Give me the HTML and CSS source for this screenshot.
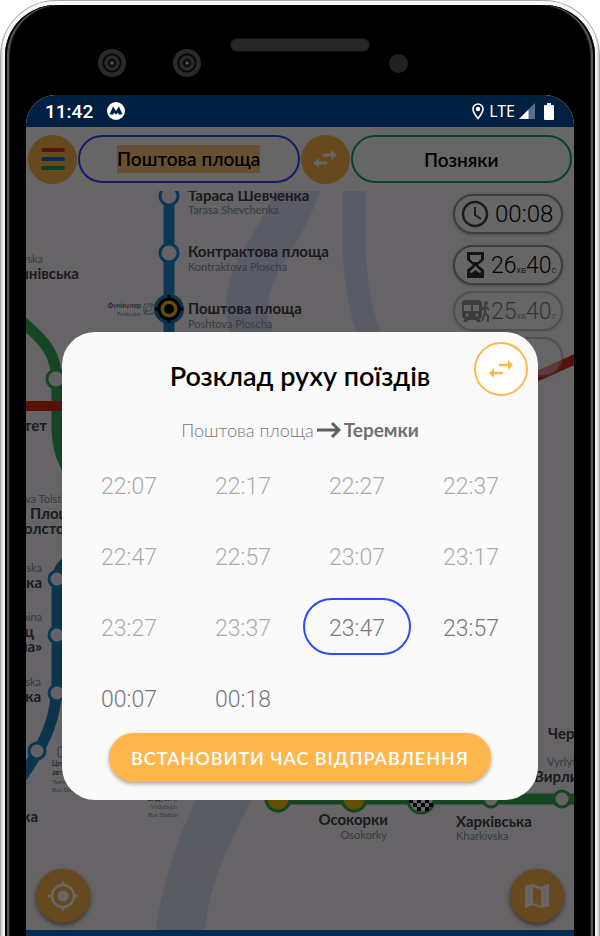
FILE: index.html
```html
<!DOCTYPE html>
<html lang="uk">
<head>
<meta charset="utf-8">
<meta name="viewport" content="width=device-width, initial-scale=1">
<title>Розклад руху поїздів</title>
<link rel="stylesheet" href="styles.css">
</head>
<body>
<div class="phone">
  <div class="bezel">
    <header class="hardware">
      <span class="lenses"><i class="lens"></i><i class="lens"></i></span>
      <span class="speaker"></span>
      <span class="sensor"></span>
    </header>
    <div class="screen">
      <div class="status">
        <span class="clock">11:42</span>
        <svg class="metro" viewBox="0 0 18 18" aria-hidden="true"><circle cx="9" cy="9" r="9" fill="#fff"/><path d="M2.500 12.500 6 4.500l3 4.500 3-4.500 3.500 8h-3.800l-.7-2L9 12.800l-2-2.300-.7 2z" fill="#002041"/></svg>
        <span class="spacer"></span>
        <svg class="pin" viewBox="0 0 12 17" aria-hidden="true"><path d="M6 1a5 5 0 0 0-5 5c0 3.500 5 9.500 5 9.500S11 9.500 11 6a5 5 0 0 0-5-5z" fill="none" stroke="#fff" stroke-width="1.600"/><circle cx="6" cy="6" r="2.200" fill="#fff"/></svg>
        <span class="lte">LTE</span>
        <svg class="signal" viewBox="0 0 16 16" aria-hidden="true"><path d="M0 16 16 0v16z" fill="#596f87"/><path d="M0 16 9.500 6.500V16z" fill="#fff"/></svg>
        <svg class="battery" viewBox="0 0 10 17" aria-hidden="true"><path d="M3 0h4v2h2a1 1 0 0 1 1 1v13a1 1 0 0 1-1 1H1a1 1 0 0 1-1-1V3a1 1 0 0 1 1-1h2z" fill="#fff"/></svg>
      </div>
      <main class="app">
        <div class="route">
          <button class="round" type="button" aria-label="Меню">
            <svg class="icon24" viewBox="0 0 24 24"><g stroke-width="4" stroke-linecap="round"><path d="M2 3h20" stroke="#d5303a"/><path d="M2 12h20" stroke="#0a7cc5"/><path d="M2 21h20" stroke="#1ca350"/></g></svg>
          </button>
          <button class="station from" type="button"><mark>Поштова площа</mark></button>
          <button class="round" type="button" aria-label="Поміняти станції">
            <svg class="icon24" viewBox="0 0 24 24"><g fill="none" stroke="#fff" stroke-width="3" stroke-linecap="round"><path d="M11 8h9M4 16h9"/></g><path d="m18 3 6 5-6 5zM6 11l-6 5 6 5z" fill="#fff"/></svg>
          </button>
          <button class="station to" type="button">Позняки</button>
        </div>
        <div class="map">
          <svg class="scheme" viewBox="26 191 548 745" preserveAspectRatio="xMidYMin slice" role="img" aria-label="Схема метро">
            <g fill="none" stroke="#dfe5ff">
              <path d="M302 180C280 245 246 265 247 310C250 350 280 400 340 430" stroke-width="42"/>
              <path d="M354 180V250C356 300 365 325 385 380" stroke-width="23"/>
            </g>
            <path d="M155 936C160 890 180 830 197 799H252C225 850 207 890 205 936z" fill="#e2e6f8"/>
            <path d="M178 850H225L217 871H171z" fill="#e8e4f8"/>
            <path d="M169 191V345" stroke="#1c8ad1" stroke-width="11"/>
            <path d="M20 320C44 340 57 352 57 385V430C58 455 66 470 80 485" stroke="#37ad57" stroke-width="11" fill="none"/>
            <path d="M20 406H470L580 357" stroke="#db2a19" stroke-width="10" fill="none"/>
            <path d="M68 560C57 570 57 575 57 590V680C57 720 45 742 22 777" stroke="#1c80bd" stroke-width="11" fill="none"/>
            <path d="M270 799H580" stroke="#37ad57" stroke-width="11"/>
            <g fill="#fbf4fa" stroke="#1c8ad1" stroke-width="3"><circle cx="169" cy="196" r="9"/><circle cx="169" cy="253" r="9"/><circle cx="57" cy="579" r="8"/><circle cx="57" cy="635" r="8"/><circle cx="57" cy="693" r="8"/><circle cx="37" cy="751" r="8"/></g>
            <g fill="#fbf4fa" stroke="#37ad57" stroke-width="3"><circle cx="56" cy="379" r="9"/><circle cx="491" cy="799" r="8"/><circle cx="562" cy="799" r="8"/></g>
            <circle cx="169" cy="309" r="15" fill="#1c80bd"/><circle cx="169" cy="309" r="10" fill="#f5c400" stroke="#000" stroke-width="3"/><circle cx="169" cy="309" r="5"/><path d="M169 295v5M169 318v5M155 309h5M178 309h5" stroke="#000" stroke-width="3"/>
            <g fill="#f5c400" stroke="#37ad57" stroke-width="3"><circle cx="278" cy="799" r="12"/><circle cx="354" cy="799" r="12"/></g>
            <circle cx="421" cy="800" r="13" fill="#fff" stroke="#37ad57" stroke-width="3"/>
            <path d="M409 799h4v4h-4zM417 799h4v4h-4zM425 799h4v4h-4zM413 803h4v4h-4zM421 803h4v4h-4zM429 803h4v4h-4zM417 807h4v4h-4zM425 807h4v4h-4z"/>
            <g class="name">
              <text x="188" y="201">Тараса Шевченка</text><text x="188" y="257">Контрактова площа</text><text x="188" y="314">Поштова площа</text>
              <text x="79" y="279" class="end">Лук’янівська</text><text x="47" y="431" class="end">Університет</text>
              <text x="30" y="519">Площа</text><text x="24" y="534">олстого</text>
              <text x="42" y="588" class="end">Олімпійська</text><text x="34" y="637" class="end">Палац</text><text x="42" y="652" class="end">«Україна»</text><text x="41" y="702" class="end">Либідська</text><text x="38" y="822" class="end">Деміївська</text>
              <text x="388" y="825" class="end">Осокорки</text><text x="456" y="827">Харківська</text><text x="548" y="739">Червоний хутір</text><text x="534" y="782">Вирлиця</text>
            </g>
            <g class="latin">
              <text x="188" y="214">Tarasa Shevchenka</text><text x="188" y="271">Kontraktova Ploscha</text><text x="188" y="328">Poshtova Ploscha</text>
              <text x="43" y="263" class="end">Lukianivska</text><text x="25" y="503">va Tolstoho</text><text x="42" y="572" class="end">Olimpiiska</text><text x="42" y="621" class="end">Ukraina</text><text x="41" y="686" class="end">Lybidska</text>
              <text x="387" y="839" class="end">Osokorky</text><text x="456" y="840">Kharkivska</text><text x="547" y="766">Vyrlytsia</text>
            </g>
            <g class="tiny">
              <text x="141" y="308" class="end dark">Фунікулер</text><text x="141" y="316" class="end">Funicular</text>
              <text x="52" y="766" class="dark">Центральний</text><text x="52" y="775" class="dark">автовокзал</text><text x="52" y="784">Tsentralnyi</text><text x="52" y="792">Bus Station</text>
              <text x="177" y="801" class="end dark">Видубичі</text><text x="177" y="809" class="end">Vydubych</text><text x="178" y="817" class="end">Bus Station</text>
            </g>
            <g fill="none" stroke="#7f9aaa"><rect x="144" y="304" width="10" height="10" rx="2"/><path d="M146 311c0-5 2-5 6-5 0 5-2 5-6 5l-1 2"/><rect x="58" y="747" width="10" height="10" rx="2"/></g>
          </svg>
          <div class="stats">
            <div class="pill"><svg class="icon28" viewBox="0 0 28 28"><circle cx="14" cy="14" r="12" fill="none" stroke="#444" stroke-width="2.500"/><path d="M14 7v8l6 4" fill="none" stroke="#444" stroke-width="2"/></svg><span>00:08</span></div>
            <div class="pill ride"><svg class="icon28" viewBox="0 0 28 28"><path d="M6 1h17v8l-6 5 6 5v8H6v-8l6-5-6-5z" fill="#333"/><path d="M9 4h11v4l-3 3h-5L9 8zM14.500 15l6 6-2 1-4-3-4 3-2-1z" fill="#fff"/></svg><span>26<small>хв</small>40<small>с</small></span></div>
            <div class="pill ride faded"><svg class="icon28" viewBox="0 0 28 28"><path d="M5 3h11c3 0 5 1 5 4v11c0 2-1 4-3 4l2 3h-4l-1-2H7l-1 2H2l2-3c-2 0-3-2-3-4V7c0-3 1-4 4-4z" fill="#333"/><path d="M3 8h7v6H3zM12 8h6v6h-6z" fill="#fff"/><circle cx="6" cy="18" r="1.500" fill="#fff"/><circle cx="16" cy="18" r="1.500" fill="#fff"/><circle cx="25" cy="6" r="2" fill="#333"/><path d="M24 9v7l3 3v6M24 16l-3 8M21 13l3-4 4 4" fill="none" stroke="#333" stroke-width="2"/></svg><span>25<small>хв</small>40<small>с</small></span></div>
            <div class="pill faded"></div>
          </div>
          <div class="fabs">
            <button class="fab" type="button" aria-label="Моє місце"><svg class="icon30" viewBox="0 0 30 30"><g fill="none" stroke="#fff" stroke-width="2.500"><circle cx="15" cy="15" r="11"/><path d="M15 0v5M15 25v5M0 15h5M25 15h5"/></g><circle cx="15" cy="15" r="5.500" fill="#fff"/></svg></button>
            <button class="fab" type="button" aria-label="Карта"><svg class="icon24" viewBox="0 0 24 24"><path d="M0 2 8 0l8 3 8-3v22l-8 2-8-3-8 3zM8 3v16l8 3V6z" fill="#fff" fill-rule="evenodd"/></svg></button>
          </div>
          <div class="footbar"></div>
        </div>
        <div class="scrim">
          <section class="dialog" role="dialog" aria-labelledby="dialog-title">
            <button class="swap" type="button" aria-label="Змінити напрямок"><svg class="icon24" viewBox="0 0 24 24"><g fill="none" stroke="#ffb74d" stroke-width="2.500" stroke-linecap="round"><path d="M11 8h9M4 16h9"/></g><path d="m19 3 5 5-5 5zM5 11l-5 5 5 5z" fill="#ffb74d"/></svg></button>
            <h1 id="dialog-title">Розклад руху поїздів</h1>
            <p class="direction"><span>Поштова площа</span><svg class="arrow" viewBox="0 0 24 16" aria-hidden="true"><path d="M0 8h22M15 1l7 7-7 7" fill="none" stroke="#596163" stroke-width="3"/></svg><strong>Теремки</strong></p>
            <div class="times">
              <button type="button" class="past">22:07</button><button type="button" class="past">22:17</button><button type="button" class="past">22:27</button><button type="button" class="past">22:37</button>
              <button type="button" class="past">22:47</button><button type="button" class="past">22:57</button><button type="button" class="past">23:07</button><button type="button" class="past">23:17</button>
              <button type="button" class="past">23:27</button><button type="button" class="past">23:37</button><button type="button" class="chosen">23:47</button><button type="button">23:57</button>
              <button type="button">00:07</button><button type="button">00:18</button>
            </div>
            <button class="submit" type="button">ВСТАНОВИТИ ЧАС ВІДПРАВЛЕННЯ</button>
          </section>
        </div>
      </main>
    </div>
  </div>
</div>
</body>
</html>
```
FILE: styles.css
```css
* { box-sizing: border-box; }

body {
  margin: 0;
  background: #fff;
  font-family: Lato, "Noto Sans", sans-serif;
  color: #000;
}

button {
  font: inherit;
  color: inherit;
  padding: 0;
  border: 0;
  background: none;
}

svg { display: block; flex: none; }

.phone {
  display: flex;
  height: 100vh;
  min-height: 860px;
  padding: 4px 4px 0;
  border: 1px solid #aaa;
  border-bottom: 0;
  border-radius: 56px 56px 0 0;
  background: linear-gradient(90deg, #ccc, #f8f8f8 3px, #f8f8f8 calc(100% - 3px), #ccc);
  overflow: hidden;
}

.bezel {
  flex: 1;
  min-width: 0;
  display: flex;
  flex-direction: column;
  padding: 0 21px;
  border-radius: 51px 51px 0 0;
  background: #000;
  box-shadow: inset 2px 0 #000, inset -2px 0 #000, inset 4px 0 #555, inset -4px 0 #555, inset 5px 0 #222, inset -5px 0 #222;
}

.hardware {
  flex: none;
  height: 90px;
  display: grid;
  grid-template-columns: 1fr 138px 1fr;
  align-items: center;
}

.lenses { display: flex; gap: 47px; justify-content: flex-end; padding: 26px 30px 0 0; }

.lens {
  width: 28px;
  height: 28px;
  border-radius: 50%;
  background: radial-gradient(circle, #555 0 1px, #111 2px 4px, #2c2c2c 5px 7px, #080808 8px 9px, #2a2a2a 10px);
}

.speaker { height: 12px; margin-top: -10px; border-radius: 6px; background: #262626; box-shadow: 0 0 0 1px #111; }

.sensor { width: 19px; height: 19px; margin: 26px 0 0 20px; border-radius: 50%; background: #212121; }

.screen {
  flex: 1;
  min-height: 0;
  display: flex;
  flex-direction: column;
  border-radius: 30px 30px 0 0;
  overflow: hidden;
  background: #fff;
}

.status {
  flex: none;
  height: 32px;
  display: flex;
  align-items: center;
  padding: 0 20px 0 19px;
  background: #002041;
  color: #fff;
  font-family: Roboto, sans-serif;
}

.clock { font-size: 19px; font-weight: 500; }
.metro { width: 18px; height: 18px; margin-left: 14px; }
.spacer { flex: 1; }
.pin { width: 12px; height: 17px; }
.lte { margin: 0 4px 0 5px; font-size: 16px; font-family: "Noto Sans", sans-serif; }
.signal { width: 16px; height: 16px; }
.battery { width: 10px; height: 17px; margin-left: 9px; }

.app { flex: 1; min-height: 0; position: relative; display: flex; flex-direction: column; }

.route {
  flex: none;
  height: 64px;
  display: flex;
  align-items: center;
  gap: 1px;
  padding: 0 2px;
}

.round {
  flex: none;
  width: 49px;
  height: 49px;
  display: grid;
  place-items: center;
  border-radius: 50%;
  background: #ffb74d;
}

.station {
  flex: 1;
  min-width: 0;
  height: 48px;
  border: 2px solid #3048ff;
  border-radius: 24px;
  font-size: 19px;
  font-weight: 600;
}

.to { border-color: #17a85b; }
.station mark { display: inline-block; color: inherit; background: #ffc97a; line-height: 28px; }

.icon24 { width: 24px; height: 24px; }
.icon28 { width: 28px; height: 28px; }
.icon30 { width: 30px; height: 30px; }

.map { flex: 1; min-height: 0; position: relative; background: #fffafe; overflow: hidden; }
.scheme { position: absolute; inset: 0; width: 100%; height: 100%; }
.name { font-size: 15px; font-weight: 700; fill: #44424a; }
.latin { font-size: 11px; fill: #7e98a8; }
.tiny { font-size: 6px; fill: #7e98a8; }
.tiny .dark { font-size: 7px; fill: #44424a; }
.end { text-anchor: end; }

.stats {
  position: absolute;
  top: 3px;
  right: 11px;
  display: flex;
  flex-direction: column;
  gap: 6px;
}

.pill {
  width: 110px;
  height: 40px;
  display: flex;
  align-items: center;
  gap: 6px;
  padding-left: 6px;
  border: 2px solid #999;
  border-radius: 20px;
  background: #fff;
  font-family: Roboto, sans-serif;
  font-size: 24px;
  font-weight: 300;
  white-space: nowrap;
  box-shadow: 0 1px 3px #0004;
}

.pill small { font-size: 9px; }
.pill.ride { gap: 2px; font-size: 23px; }
.pill:first-child { margin-bottom: 5px; }
.pill.faded { opacity: .5; }

.fabs {
  position: absolute;
  inset: auto 10px 13px;
  display: flex;
  justify-content: space-between;
}

.fab {
  width: 54px;
  height: 54px;
  display: grid;
  place-items: center;
  border-radius: 50%;
  background: #ffb74d;
  box-shadow: 0 2px 5px #0008;
}

.footbar { position: absolute; inset: auto 0 0; height: 6px; background: #0d6fc8; }

.scrim {
  position: absolute;
  inset: 0;
  padding: 205px 36px 0;
  background: rgba(0, 0, 0, .6);
}

.dialog {
  position: relative;
  display: flex;
  flex-direction: column;
  align-items: center;
  padding: 27px 13px 18px;
  border-radius: 33px;
  background: #fafafa;
}

.dialog h1 { margin: 0; font-size: 27px; line-height: 34px; font-weight: 600; }

.swap {
  position: absolute;
  top: 10px;
  right: 10px;
  width: 54px;
  height: 54px;
  display: grid;
  place-items: center;
  border: 2px solid #ffb74d;
  border-radius: 50%;
  background: #fff;
}

.direction {
  display: flex;
  align-items: center;
  gap: 3px;
  margin: 24px 0 13px;
  font-size: 18px;
  line-height: 26px;
  font-weight: 300;
  color: #777;
}

.direction strong { font-size: 19px; font-weight: 700; color: #707070; }
.arrow { width: 24px; height: 16px; }

.times {
  align-self: stretch;
  display: grid;
  grid-template-columns: repeat(4, 1fr);
  grid-auto-rows: 57px;
  gap: 14px 6px;
}

.times button {
  padding-top: 3px;
  border-radius: 29px;
  font-family: Roboto, sans-serif;
  font-size: 23px;
  font-weight: 300;
  color: #777;
}

.times .past { color: #aaa; }
.times .chosen { border: 2px solid #2c4bff; }

.submit {
  width: 382px;
  max-width: 100%;
  height: 49px;
  margin-top: 7px;
  border-radius: 25px;
  background: #ffb74d;
  color: #fff;
  font-size: 18px;
  font-weight: 600;
  letter-spacing: 1px;
  box-shadow: 0 2px 4px #0005;
}
```
